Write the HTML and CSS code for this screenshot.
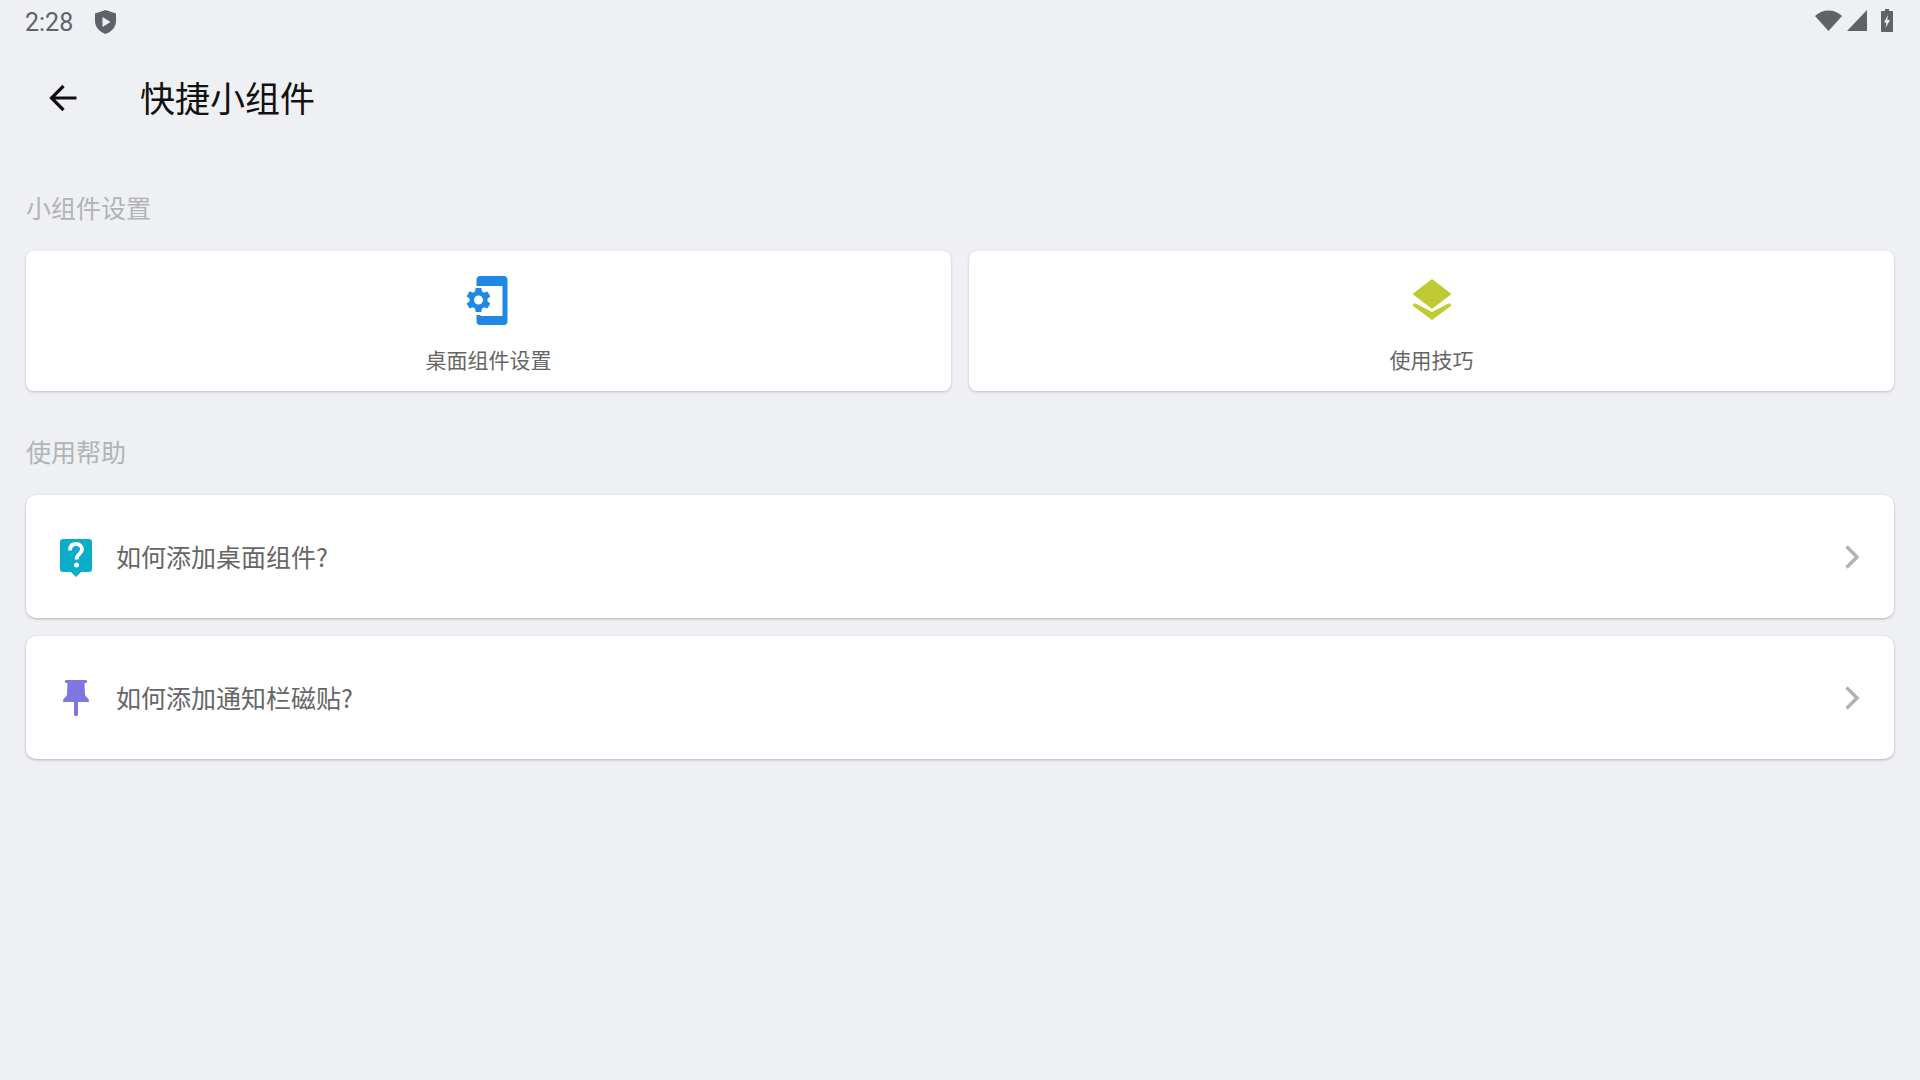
FILE: index.html
```html
<!DOCTYPE html>
<html lang="zh-CN">
<head>
    <meta charset="UTF-8">
    <meta name="viewport" content="width=device-width, initial-scale=1.0">
    <title>快捷小组件</title>
    <link rel="stylesheet" href="styles.css">
</head>
<body>
    <div class="status-bar">
        <span class="time">2:28</span>
        <svg class="shield" width="21" height="24" viewBox="0 0 21 24">
            <path d="M10.5 0 L21 3.5 V11 C21 17 16.500 22 10.500 24 C4.500 22 0 17 0 11 V3.500 Z" fill="#5f6368"/>
            <path d="M7.500 7 L15.500 12 L7.500 17 Z" fill="#eef0f4"/>
        </svg>
        <div class="status-icons">
            <svg width="27" height="21" viewBox="0 0 27 21">
                <path d="M13.500 21 L0 6 C3.500 2.500 8 0.500 13.500 0.500 C19 0.500 23.500 2.500 27 6 Z" fill="#5f6368"/>
            </svg>
            <svg width="20" height="21" viewBox="0 0 20 21">
                <path d="M0 21 L20 0 V21 Z" fill="#5f6368"/>
            </svg>
            <svg class="battery" width="12" height="23" viewBox="0 0 12 23">
                <path fill-rule="evenodd" d="M4 0 H8 V2 H11 C11.600 2 12 2.400 12 3 V22 C12 22.600 11.600 23 11 23 H1 C0.400 23 0 22.600 0 22 V3 C0 2.400 0.400 2 1 2 H4 Z M7 6 L3 13.500 H5.500 L4.500 19 L9 11 H6.300 Z" fill="#5f6368"/>
            </svg>
        </div>
    </div>

    <header class="toolbar">
        <svg class="back" width="28" height="28" viewBox="0 0 28 28">
            <path d="M27.500 14 H2.500 M14.500 2 L2.500 14 L14.500 26" fill="none" stroke="#111" stroke-width="3.200"/>
        </svg>
        <h1>快捷小组件</h1>
    </header>

    <main class="content">
        <h2 class="section-title first">小组件设置</h2>
        <div class="card-grid">
            <div class="card">
                <svg width="48" height="49" viewBox="0 0 48 49">
                    <path d="M11.500 10 V3.500 C11.500 1.500 13 0 15 0 H39 C41 0 42.500 1.500 42.500 3.500 V45.500 C42.500 47.500 41 49 39 49 H15 C13 49 11.500 47.500 11.500 45.500 V39 H15.500 V40 H37.500 V10 Z" fill="#1e88e5"/>
                    <g transform="translate(-1.500 9) scale(1.250)">
                        <path fill-rule="evenodd" d="M19.140 12.940c.04-.3.06-.61.06-.94 0-.32-.02-.64-.07-.94l2.030-1.580a.49.49 0 0 0 .12-.61l-1.920-3.320a.488.488 0 0 0-.59-.29l-2.390.96c-.5-.38-1.030-.7-1.620-.94l-.36-2.540a.484.484 0 0 0-.48-.41h-3.840c-.24 0-.43.17-.47.41l-.36 2.540c-.59.24-1.130.57-1.620.94l-2.390-.96c-.22-.08-.47 0-.59.22L2.740 8.870c-.12.21-.08.47.12.61l2.030 1.580c-.05.3-.09.63-.09.94s.02.64.07.94l-2.030 1.580a.49.49 0 0 0-.12.61l1.920 3.320c.12.22.37.29.59.22l2.390-.96c.5.38 1.030.7 1.620.94l.36 2.540c.05.24.24.41.48.41h3.840c.24 0 .44-.17.47-.41l.36-2.540c.59-.24 1.130-.56 1.620-.94l2.390.96c.22.08.47 0 .59-.22l1.920-3.320c.12-.22.07-.47-.12-.61l-2.010-1.580zM12 15.600c-1.980 0-3.600-1.620-3.600-3.600s1.620-3.600 3.600-3.600 3.600 1.620 3.600 3.600-1.620 3.600-3.600 3.600z" fill="#1e88e5"/>
                    </g>
                </svg>
                <span class="card-label">桌面组件设置</span>
            </div>
            <div class="card">
                <svg width="48" height="49" viewBox="0 0 48 49">
                    <path d="M24 3 L43.500 18 L24 33 L4.500 18 Z" fill="#c0ca33"/>
                    <path d="M4.500 29.500 L6.500 27 L24 36 L41.500 27 L43.500 29.500 L24 44 Z" fill="#c0ca33"/>
                </svg>
                <span class="card-label">使用技巧</span>
            </div>
        </div>

        <h2 class="section-title">使用帮助</h2>
        <div class="help-list">
            <div class="help-row">
                <svg class="row-icon help-icon" width="32" height="38" viewBox="0 0 32 38">
                    <path d="M3 0 H29 C31 0 32 1 32 3 V30 C32 32 31 33 29 33 H21 L16 38 L11 33 H3 C1 33 0 32 0 30 V3 C0 1 1 0 3 0 Z" fill="#0aaec8"/>
                    <path d="M10 11.500 C10 7 12.500 5 16 5 C19.800 5 22 7.200 22 10.500 C22 14.800 16.500 15 16.500 20.500" fill="none" stroke="#fff" stroke-width="3.800"/>
                    <circle cx="16.500" cy="26" r="2.500" fill="#fff"/>
                </svg>
                <span class="row-text">如何添加桌面组件?</span>
                <svg class="chevron" width="14" height="24" viewBox="0 0 14 24">
                    <path d="M1.500 1.500 L12 12 L1.500 22.500" fill="none" stroke="#b2b2b2" stroke-width="3.400"/>
                </svg>
            </div>
            <div class="help-row">
                <svg class="row-icon" width="32" height="36" viewBox="0 0 32 36">
                    <path d="M6 0 H26 C27.500 0 27.500 3 26 3 H24.500 L25 14 C25 17 29 18 29 21 C29 22 28.500 22 28 22 H18 V34.500 C18 36.500 14 36.500 14 34.500 V22 H4 C3.500 22 3 22 3 21 C3 18 7 17 7 14 L7.500 3 H6 C4.500 3 4.500 0 6 0 Z" fill="#7e77e0"/>
                </svg>
                <span class="row-text">如何添加通知栏磁贴?</span>
                <svg class="chevron" width="14" height="24" viewBox="0 0 14 24">
                    <path d="M1.500 1.500 L12 12 L1.500 22.500" fill="none" stroke="#b2b2b2" stroke-width="3.400"/>
                </svg>
            </div>
        </div>
    </main>
</body>
</html>
```

FILE: styles.css
```css
/* General Reset */
* {
    margin: 0;
    padding: 0;
    box-sizing: border-box;
}

body {
    font-family: "Noto Sans CJK SC", "Noto Sans", sans-serif;
    background-color: #eef0f4;
    width: 1920px;
    height: 1080px;
    overflow: hidden;
}

svg {
    display: block;
    flex-shrink: 0;
}

/* Status bar */
.status-bar {
    display: flex;
    align-items: center;
    height: 44px;
    padding: 0 27px 0 25px;
}

.time {
    font-family: Roboto, sans-serif;
    font-size: 25px;
    color: #5f6368;
    width: 70px;
}

.status-icons {
    display: flex;
    align-items: center;
    gap: 5px;
    margin-left: auto;
    margin-bottom: 4px;
}

.status-icons .battery {
    margin-left: 9px;
}

/* Toolbar */
.toolbar {
    display: flex;
    align-items: center;
    height: 108px;
    padding-left: 49px;
}

.toolbar h1 {
    font-size: 35px;
    font-weight: 400;
    color: #111;
    margin-left: 63px;
    margin-bottom: 4px;
}

/* Sections */
.content {
    padding: 0 26px;
}

.section-title {
    font-size: 25px;
    font-weight: 400;
    line-height: 36px;
    color: #b1b3b7;
    margin-top: 42px;
    margin-bottom: 26px;
}

.section-title.first {
    margin-top: 37px;
    margin-bottom: 26px;
}

/* Top cards */
.card-grid {
    display: grid;
    grid-template-columns: 1fr 1fr;
    gap: 18px;
}

.card {
    display: flex;
    flex-direction: column;
    align-items: center;
    height: 140px;
    padding-top: 25px;
    background-color: #fff;
    border-radius: 8px;
    box-shadow: 0 1px 3px rgba(0, 0, 0, 0.2);
}

.card-label {
    font-size: 21px;
    line-height: 30px;
    color: #666;
    margin-top: 19px;
}

/* Help rows */
.help-list {
    display: flex;
    flex-direction: column;
    gap: 18px;
}

.help-row {
    display: flex;
    align-items: center;
    height: 123px;
    padding: 0 35px 0 34px;
    background-color: #fff;
    border-radius: 10px;
    box-shadow: 0 1px 3px rgba(0, 0, 0, 0.25);
}

.help-icon {
    margin-top: 2px;
}

.row-text {
    font-size: 25px;
    color: #666;
    margin-left: 24px;
    margin-bottom: 2px;
}

.chevron {
    margin-left: auto;
}
```
